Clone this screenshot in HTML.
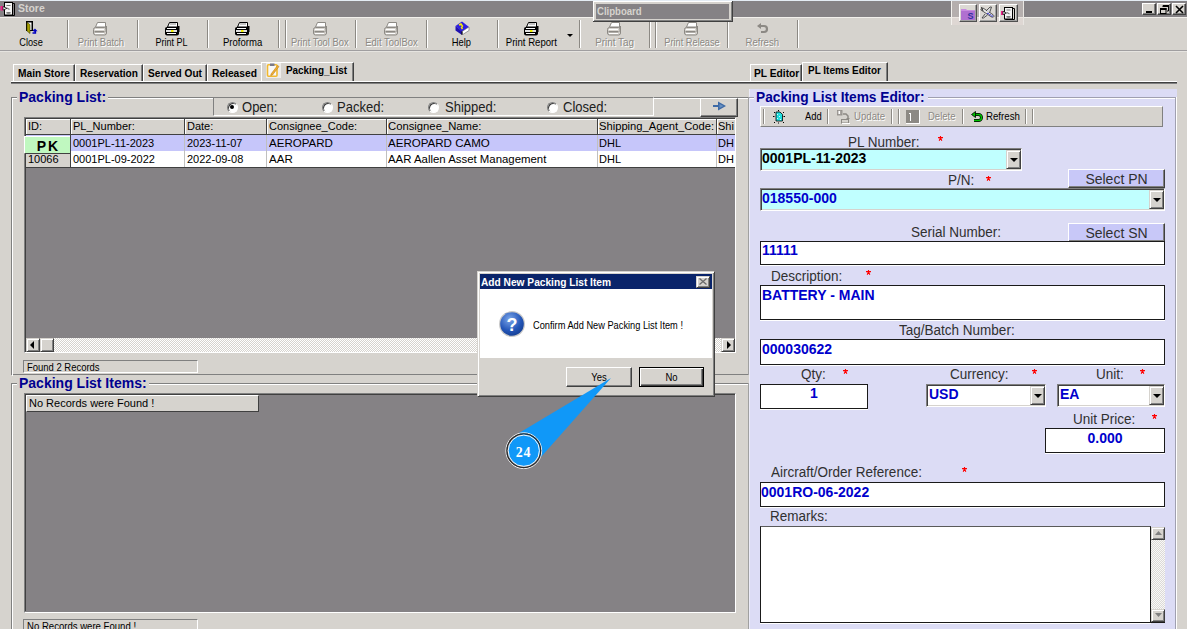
<!DOCTYPE html>
<html><head><meta charset="utf-8">
<style>
*{box-sizing:border-box}
html,body{margin:0;padding:0}
body{width:1187px;height:631px;overflow:hidden;position:relative;background:#d6d3ce;font-family:"Liberation Sans",sans-serif;color:#000}
.a{position:absolute}
.t{position:absolute;white-space:nowrap;line-height:1}
.sep{position:absolute;top:20px;height:28px;width:2px;border-left:1px solid #8c8984;border-right:1px solid #fff}
.tb{position:absolute;top:37px;font-size:11px;line-height:1;white-space:nowrap;text-align:center}
.dis{color:#8c8984;text-shadow:1px 1px 0 #fff}
.tab{position:absolute;top:64px;height:17px;border-top:1px solid #fff;border-left:1px solid #fff;border-right:1px solid #404040;box-shadow:inset -1px 0 0 #808080;font-size:11px;font-weight:bold;line-height:1;white-space:nowrap}
.tt{position:absolute;white-space:nowrap;line-height:1;font-size:11px;font-weight:bold;transform-origin:left}
.etch{position:absolute;border:1px solid #808080;box-shadow:inset 1px 1px 0 #fff,1px 1px 0 #fff}

.rad{position:absolute;width:11px;height:11px;border-radius:50%;background:#fff;border:1px solid;border-color:#808080 #fff #fff #808080;box-shadow:inset 1px 1px 0 #404040}
.rad.sel::after{content:"";position:absolute;left:2.5px;top:2.5px;width:4px;height:4px;border-radius:50%;background:#000}
.rl{font-size:14px;color:#202020;transform:scaleX(0.93);transform-origin:left}
.gl{position:absolute;top:119px;width:1px;height:48px;background:#8c8984}
.gt{position:absolute;white-space:nowrap;line-height:1;font-size:11px;color:#000}
.btn3{position:absolute;background:#d6d3ce;border-top:1px solid #d6d3ce;border-left:1px solid #d6d3ce;border-right:1px solid #404040;border-bottom:1px solid #404040;box-shadow:inset 1px 1px 0 #fff,inset -1px -1px 0 #808080}
.stat{position:absolute;border-top:1px solid #808080;border-left:1px solid #808080;border-right:1px solid #fff;border-bottom:1px solid #fff}

.tt2{position:absolute;white-space:nowrap;line-height:1;font-size:11px;transform-origin:left}
.msep{position:absolute;top:109px;width:2px;height:15px;border-left:1px solid #8c8984;border-right:1px solid #fff}
.lb{position:absolute;white-space:nowrap;line-height:1;font-size:14px;color:#303030;transform:scaleX(0.965);transform-origin:left}
.ast{position:absolute;white-space:nowrap;line-height:1;font-size:12px;color:#f00}
.vt{position:absolute;white-space:nowrap;line-height:1;font-size:14px;font-weight:bold;color:#0000cc}
.cmb{position:absolute;border-top:1px solid #808080;border-left:1px solid #808080;border-right:1px solid #fff;border-bottom:1px solid #fff;box-shadow:inset 1px 1px 0 #404040,inset -1px -1px 0 #d6d3ce}
.ddb{position:absolute;width:15px;background:#d6d3ce;border-top:1px solid #d6d3ce;border-left:1px solid #d6d3ce;border-right:1px solid #404040;border-bottom:1px solid #404040;box-shadow:inset 1px 1px 0 #fff,inset -1px -1px 0 #808080}
.ddb::after{content:"";position:absolute;left:3px;top:7px;border-left:4px solid transparent;border-right:4px solid transparent;border-top:4px solid #000}
.selb{position:absolute;background:#c8c8f8;border-top:1px solid #fff;border-left:1px solid #fff;border-right:1px solid #404040;border-bottom:1px solid #404040;box-shadow:inset -1px -1px 0 #808080}
.box{position:absolute;background:#fff;border:1px solid #1a1a1a;box-shadow:0 1px 0 #fff}

.wc{position:absolute;width:14px;height:12px;background:#d6d3ce;border-top:1px solid #fff;border-left:1px solid #fff;border-right:1px solid #404040;border-bottom:1px solid #404040;box-shadow:inset -1px -1px 0 #808080}
</style></head><body>

<!-- title bar -->
<div class="a" style="left:0;top:0;width:1187px;height:1px;background:#e4ecf4"></div>
<div class="a" style="left:0;top:1px;width:1187px;height:16px;background:#858285"></div>
<div class="a" style="left:0;top:17px;width:1187px;height:1px;background:#f2f0ec"></div>
<div class="t" style="left:18px;top:3px;font-size:11px;font-weight:bold;color:#d6d3ce;transform:scaleX(0.95);transform-origin:left">Store</div>

<!-- toolbar bottom -->
<div class="a" style="left:0;top:50px;width:1187px;height:1px;background:#a09ea0"></div>
<div class="a" style="left:0;top:51px;width:1187px;height:1px;background:#e6e4e0"></div>

<!-- toolbar separators -->
<div class="sep" style="left:67px"></div>
<div class="sep" style="left:137px"></div>
<div class="sep" style="left:207px"></div>
<div class="sep" style="left:278px"></div>
<div class="sep" style="left:285px"></div>
<div class="sep" style="left:355px"></div>
<div class="sep" style="left:426px"></div>
<div class="sep" style="left:497px"></div>
<div class="sep" style="left:579px"></div>
<div class="sep" style="left:649px"></div>
<div class="sep" style="left:655px"></div>
<div class="sep" style="left:727px"></div>
<div class="sep" style="left:797px"></div>

<!-- toolbar labels -->
<div class="tb" style="left:-19.0px;width:100px"><span style="display:inline-block;transform:scaleX(0.836)">Close</span></div>
<div class="tb dis" style="left:51.2px;width:100px"><span style="display:inline-block;transform:scaleX(0.864)">Print Batch</span></div>
<div class="tb" style="left:122.0px;width:100px"><span style="display:inline-block;transform:scaleX(0.818)">Print PL</span></div>
<div class="tb" style="left:192.6px;width:100px"><span style="display:inline-block;transform:scaleX(0.867)">Proforma</span></div>
<div class="tb dis" style="left:270.3px;width:100px"><span style="display:inline-block;transform:scaleX(0.854)">Print Tool Box</span></div>
<div class="tb dis" style="left:341.2px;width:100px"><span style="display:inline-block;transform:scaleX(0.861)">Edit ToolBox</span></div>
<div class="tb" style="left:411.7px;width:100px"><span style="display:inline-block;transform:scaleX(0.850)">Help</span></div>
<div class="tb" style="left:481.7px;width:100px"><span style="display:inline-block;transform:scaleX(0.872)">Print Report</span></div>
<div class="tb dis" style="left:564.3px;width:100px"><span style="display:inline-block;transform:scaleX(0.899)">Print Tag</span></div>
<div class="tb dis" style="left:642.0px;width:100px"><span style="display:inline-block;transform:scaleX(0.839)">Print Release</span></div>
<div class="tb dis" style="left:712.1px;width:100px"><span style="display:inline-block;transform:scaleX(0.873)">Refresh</span></div>
<svg width="0" height="0" style="position:absolute">
 <defs>
  <g id="prn">
   <path d="M4.5 0.5h8v4.5h-10z" fill="#fff" stroke="#000"/>
   <path d="M5 2h6" stroke="#888"/>
   <rect x="0" y="5" width="14" height="8.5" rx="2" fill="#000"/>
   <rect x="2" y="6" width="9" height="1" fill="#fff"/>
   <rect x="1" y="8" width="11" height="2" fill="#e0e0e0"/>
   <rect x="6" y="8" width="2.5" height="2" fill="#f0f000"/>
   <rect x="2" y="11" width="9" height="1" fill="#fff"/>
   <rect x="12" y="4" width="2.5" height="6" fill="#000"/>
  </g>
  <g id="prnd">
   <path d="M4.5 0.5h8v4.5h-10z" fill="#fff" stroke="#8c8984"/>
   <rect x="0.5" y="5.5" width="13" height="7.5" rx="2" fill="#d6d3ce" stroke="#8c8984"/>
   <rect x="2" y="7" width="9" height="1" fill="#fff"/>
   <rect x="1.5" y="9" width="10" height="1.5" fill="#8c8984"/>
   <rect x="2" y="11" width="9" height="1" fill="#fff"/>
   <rect x="12.5" y="4" width="1.5" height="6" fill="#8c8984"/>
  </g>
 </defs>
</svg>
<!-- door -->
<svg class="a" style="left:25px;top:21px" width="13" height="14" viewBox="0 0 13 14"><rect x="1" y="0" width="7" height="10" fill="#000"/><rect x="2.5" y="1.5" width="4" height="7.5" fill="#fff"/><path d="M2 1.5L5 3.5V12.5L2 10z" fill="#a8a000" stroke="#404000" stroke-width="0.6"/><path d="M8 9.5h3l-1.5-1.5M11 9.5l-1.5 1.5M10.5 9.5v2.5H7.5" fill="none" stroke="#0000c0" stroke-width="1.3"/></svg>
<svg class="a" style="left:93px;top:22px" width="15" height="14"><use href="#prnd"/></svg>
<svg class="a" style="left:165px;top:22px" width="15" height="14"><use href="#prn"/></svg>
<svg class="a" style="left:235px;top:22px" width="15" height="14"><use href="#prn"/></svg>
<svg class="a" style="left:313px;top:22px" width="15" height="14"><use href="#prnd"/></svg>
<svg class="a" style="left:384px;top:22px" width="15" height="14"><use href="#prnd"/></svg>
<svg class="a" style="left:524px;top:22px" width="15" height="14"><use href="#prn"/></svg>
<svg class="a" style="left:607px;top:22px" width="15" height="14"><use href="#prnd"/></svg>
<svg class="a" style="left:684px;top:22px" width="15" height="14"><use href="#prnd"/></svg>
<!-- help book -->
<svg class="a" style="left:455px;top:21px" width="15" height="14" viewBox="0 0 15 14"><path d="M0.5 5L7 0.5l7 5.5-7 5z" fill="#3020e0"/><path d="M0.5 5v4.5l6.5 4.5V10.5z" fill="#2010b0"/><path d="M7 10.5v3.5l7-4.5v-3.5z" fill="#fff" stroke="#666" stroke-width="0.6"/><path d="M4 4l2-1 1.5 2-1 1.5 1 1.5" fill="none" stroke="#f8f000" stroke-width="1.4"/><path d="M7 13.5V10.5" stroke="#000"/></svg>
<!-- print report dropdown -->
<svg class="a" style="left:567px;top:34px" width="6" height="4"><path d="M0 0h6L3 3z" fill="#000"/></svg>
<!-- refresh disabled -->
<svg class="a" style="left:756px;top:22px" width="13" height="12" viewBox="0 0 13 12"><path d="M3 4h5a3 3 0 0 1 0 6H5" fill="none" stroke="#8c8984" stroke-width="2.2"/><path d="M1 4l4-3v6z" fill="#8c8984"/></svg>


<!-- tabs left -->
<div class="a" style="left:11px;top:81px;width:1166px;height:1px;background:#fff"></div>
<div class="a" style="left:11px;top:82px;width:1166px;height:1px;background:#404040"></div>
<div class="a" style="left:11px;top:83px;width:1166px;height:1px;background:#808080"></div>
<div class="tab" style="left:13px;width:62px"><span class="tt" style="left:4px;top:3px;transform:scaleX(0.925)">Main Store</span></div>
<div class="tab" style="left:75px;width:68px"><span class="tt" style="left:4px;top:3px;transform:scaleX(0.92)">Reservation</span></div>
<div class="tab" style="left:143px;width:64px"><span class="tt" style="left:4px;top:3px;transform:scaleX(0.92)">Served Out</span></div>
<div class="tab" style="left:207px;width:54px;border-right:0;box-shadow:none"><span class="tt" style="left:4px;top:3px;transform:scaleX(0.93)">Released</span></div>
<div class="tab" style="left:261px;top:62px;height:19px;width:93px"><span class="tt" style="left:24px;top:2px;transform:scaleX(0.9)">Packing_List</span></div>
<svg class="a" style="left:266px;top:63px" width="15" height="15" viewBox="0 0 15 15"><rect x="0" y="0" width="15" height="15" fill="#fff" opacity="0.6"/><rect x="1.5" y="1.8" width="9.5" height="11.5" rx="1" fill="#f8f8f8" stroke="#f0b830" stroke-width="1.6"/><rect x="4" y="0.5" width="4.5" height="2.5" fill="#7a7a8a"/><path d="M5 11l6.5-8.5 1.5 1-6.5 8.5-1.8 0.6z" fill="#f0b030" stroke="#c08020" stroke-width="0.6"/></svg>
<div class="tab" style="left:750px;width:52px"><span class="tt" style="left:3px;top:3px;transform:scaleX(0.93)">PL Editor</span></div>
<div class="tab" style="left:802px;top:62px;height:19px;width:86px"><span class="tt" style="left:5px;top:2px;transform:scaleX(0.905)">PL Items Editor</span></div>


<!-- ===== Packing List group ===== -->
<div class="a" style="left:11px;top:97px;width:738px;height:278px;border:1px solid #808080;border-right:0"></div>
<div class="a" style="left:12px;top:98px;width:737px;height:278px;border:1px solid #fff;border-right:0;border-bottom:0"></div>
<div class="a" style="left:748px;top:97px;width:1px;height:278px;background:#a0a0a0"></div>
<div class="t" style="left:17px;top:89px;padding:0 2px;background:#d6d3ce;font-size:14px;font-weight:bold;color:#000090;height:16px;line-height:16px"><span style="display:inline-block">Packing List:</span></div>

<!-- radio box -->
<div class="a" style="left:213px;top:97px;width:441px;height:19px;border-top:1px solid #808080;border-left:1px solid #808080;border-right:1px solid #fff;border-bottom:1px solid #fff;background:#d6d3ce"></div>
<div class="rad sel" style="left:226.5px;top:101.5px"></div>
<div class="t rl" style="left:242px;top:100px">Open:</div>
<div class="rad" style="left:321.5px;top:101.5px"></div>
<div class="t rl" style="left:337px;top:100px">Packed:</div>
<div class="rad" style="left:428px;top:101.5px"></div>
<div class="t rl" style="left:445px;top:100px">Shipped:</div>
<div class="rad" style="left:547px;top:101.5px"></div>
<div class="t rl" style="left:563px;top:100px">Closed:</div>

<!-- arrow button -->
<div class="a" style="left:700px;top:98px;width:38px;height:19px;background:#d6d3ce;border-top:1px solid #fff;border-left:1px solid #fff;border-right:1px solid #404040;border-bottom:1px solid #404040;box-shadow:inset -1px -1px 0 #808080"></div>
<svg class="a" style="left:711px;top:101px" width="17" height="10" viewBox="0 0 17 10"><path d="M2 4h5V0.5l8 4.5-8 4.5V6H2z" fill="#3d6aa6"/><path d="M8.5 3l4 2-4 2z" fill="#6a90c0"/></svg>

<!-- grid -->
<div class="a" style="left:24px;top:117px;width:712px;height:236px;background:#858285;border-top:1px solid #808080;border-left:1px solid #808080;border-right:1px solid #fff;border-bottom:1px solid #fff"></div>
<div class="a" style="left:25px;top:118px;width:710px;height:1px;background:#404040"></div>
<div class="a" style="left:25px;top:118px;width:1px;height:234px;background:#404040"></div>
<!-- header row -->
<div class="a" style="left:26px;top:119px;width:709px;height:16px;background:#d6d3ce"></div>
<div class="a" style="left:26px;top:119px;width:709px;height:1px;background:#fff"></div>
<div class="a" style="left:26px;top:119px;width:1px;height:15px;background:#fff"></div>
<div class="a" style="left:26px;top:134px;width:709px;height:1px;background:#404040"></div>
<div class="a" style="left:26px;top:135px;width:709px;height:16px;background:#c6c6fa"></div>
<div class="a" style="left:26px;top:151px;width:709px;height:1px;background:#fff"></div>
<div class="a" style="left:26px;top:152px;width:709px;height:15px;background:#fff"></div>
<div class="a" style="left:26px;top:152px;width:45px;height:15px;background:#d6d3ce"></div>
<div class="a" style="left:26px;top:167px;width:709px;height:1px;background:#404040"></div>
<!-- column lines -->
<div class="a" style="left:70px;top:119px;width:1px;height:15px;background:#404040"></div><div class="a" style="left:71px;top:119px;width:1px;height:15px;background:#fff"></div><div class="a" style="left:70px;top:135px;width:1px;height:32px;background:#c0c0c0"></div>
<div class="a" style="left:184px;top:119px;width:1px;height:15px;background:#404040"></div><div class="a" style="left:185px;top:119px;width:1px;height:15px;background:#fff"></div><div class="a" style="left:184px;top:135px;width:1px;height:32px;background:#c0c0c0"></div>
<div class="a" style="left:266px;top:119px;width:1px;height:15px;background:#404040"></div><div class="a" style="left:267px;top:119px;width:1px;height:15px;background:#fff"></div><div class="a" style="left:266px;top:135px;width:1px;height:32px;background:#c0c0c0"></div>
<div class="a" style="left:386px;top:119px;width:1px;height:15px;background:#404040"></div><div class="a" style="left:387px;top:119px;width:1px;height:15px;background:#fff"></div><div class="a" style="left:386px;top:135px;width:1px;height:32px;background:#c0c0c0"></div>
<div class="a" style="left:597px;top:119px;width:1px;height:15px;background:#404040"></div><div class="a" style="left:598px;top:119px;width:1px;height:15px;background:#fff"></div><div class="a" style="left:597px;top:135px;width:1px;height:32px;background:#c0c0c0"></div>
<div class="a" style="left:716px;top:119px;width:1px;height:15px;background:#404040"></div><div class="a" style="left:717px;top:119px;width:1px;height:15px;background:#fff"></div><div class="a" style="left:716px;top:135px;width:1px;height:32px;background:#c0c0c0"></div>

<div class="gt" style="left:28px;top:121px">ID:</div>
<div class="gt" style="left:73px;top:121px">PL_Number:</div>
<div class="gt" style="left:187px;top:121px">Date:</div>
<div class="gt" style="left:269px;top:121px">Consignee_Code:</div>
<div class="gt" style="left:388px;top:121px;transform:scaleX(1.025);transform-origin:left">Consignee_Name:</div>
<div class="gt" style="left:599px;top:121px;transform:scaleX(1.017);transform-origin:left">Shipping_Agent_Code:</div>
<div class="gt" style="left:718px;top:121px">Shi</div>

<div class="gt" style="left:73px;top:138px">0001PL-11-2023</div>
<div class="gt" style="left:187px;top:138px">2023-11-07</div>
<div class="gt" style="left:269px;top:138px;transform:scaleX(1.05);transform-origin:left">AEROPARD</div>
<div class="gt" style="left:388px;top:138px;transform:scaleX(1.05);transform-origin:left">AEROPARD CAMO</div>
<div class="gt" style="left:599px;top:138px">DHL</div>
<div class="gt" style="left:718px;top:138px">DH</div>

<div class="gt" style="left:28px;top:154px">10066</div>
<div class="gt" style="left:73px;top:154px">0001PL-09-2022</div>
<div class="gt" style="left:187px;top:154px">2022-09-08</div>
<div class="gt" style="left:269px;top:154px;transform:scaleX(1.05);transform-origin:left">AAR</div>
<div class="gt" style="left:388px;top:154px;transform:scaleX(1.036);transform-origin:left">AAR Aallen Asset Management</div>
<div class="gt" style="left:599px;top:154px">DHL</div>
<div class="gt" style="left:718px;top:154px">DH</div>
<!-- PK badge -->
<div class="a" style="left:24px;top:136px;width:47px;height:18px;background:#c0f8c0;border-top:1px solid #fff;border-left:1px solid #fff;border-right:1px solid #404040;border-bottom:1px solid #404040"></div>
<div class="t" style="left:25px;top:139px;width:47px;text-align:center;font-size:14px;font-weight:bold;letter-spacing:2px">PK</div>
<div class="a" style="left:70px;top:119px;width:1px;height:48px;background:#404040"></div>

<!-- h scrollbar -->
<div class="a" style="left:26px;top:338px;width:709px;height:14px;background-color:#eceae6;background-image:repeating-conic-gradient(#d6d3ce 0 25%,#fff 0 50%);background-size:2px 2px"></div>
<div class="btn3" style="left:26px;top:338px;width:14px;height:14px"></div>
<svg class="a" style="left:30px;top:341px" width="6" height="8"><path d="M4 0v8L0 4z" fill="#000"/></svg>
<div class="btn3" style="left:40px;top:338px;width:14px;height:14px"></div>
<div class="btn3" style="left:721px;top:338px;width:14px;height:14px"></div>
<svg class="a" style="left:726px;top:341px" width="6" height="8"><path d="M1 0v8L5 4z" fill="#000"/></svg>

<!-- status -->
<div class="stat" style="left:23px;top:360px;width:175px;height:13px"><span class="t" style="left:3px;top:1px;font-size:11px;transform:scaleX(0.86);transform-origin:left">Found 2 Records</span></div>

<!-- ===== Packing List Items group ===== -->
<div class="a" style="left:11px;top:383px;width:738px;height:1px;background:#808080"></div>
<div class="a" style="left:12px;top:384px;width:737px;height:1px;background:#fff"></div>
<div class="a" style="left:11px;top:383px;width:1px;height:248px;background:#808080"></div>
<div class="a" style="left:12px;top:384px;width:1px;height:247px;background:#fff"></div>
<div class="a" style="left:748px;top:383px;width:1px;height:248px;background:#a0a0a0"></div>
<div class="t" style="left:17px;top:375px;padding:0 2px;background:#d6d3ce;font-size:14px;font-weight:bold;color:#000090;height:16px;line-height:16px">Packing List Items:</div>

<div class="a" style="left:24px;top:393px;width:712px;height:220px;background:#858285;border-top:1px solid #808080;border-left:1px solid #808080;border-right:1px solid #fff;border-bottom:1px solid #fff"></div>
<div class="a" style="left:25px;top:394px;width:710px;height:1px;background:#404040"></div>
<div class="a" style="left:25px;top:394px;width:1px;height:217px;background:#404040"></div>
<div class="a" style="left:26px;top:395px;width:233px;height:17px;background:#d6d3ce;border-top:1px solid #fff;border-left:1px solid #fff;border-right:1px solid #404040;border-bottom:1px solid #404040"></div>
<div class="gt" style="left:29px;top:398px">No Records were Found !</div>

<div class="stat" style="left:23px;top:619px;width:175px;height:13px"><span class="t" style="left:3px;top:1px;font-size:11px;transform:scaleX(0.87);transform-origin:left">No Records were Found !</span></div>
<div class="a" style="left:0;top:629px;width:1187px;height:2px;background:#fff"></div>


<!-- ===== Right panel ===== -->
<div class="a" style="left:749px;top:89px;width:428px;height:540px;background:#dcdcf5"></div>
<div class="a" style="left:749px;top:89px;width:1px;height:540px;background:#ececfa"></div>
<div class="a" style="left:749px;top:97px;width:427px;height:1px;background:#a0a0b0"></div>
<div class="a" style="left:750px;top:98px;width:426px;height:1px;background:#fff"></div>
<div class="a" style="left:1175px;top:97px;width:1px;height:532px;background:#a0a0b0"></div>
<div class="a" style="left:1176px;top:97px;width:1px;height:532px;background:#fff"></div>
<div class="a" style="left:754px;top:89px;width:174px;height:16px;background:#dcdcf5"></div><div class="t" style="left:755.5px;top:89px;font-size:14px;font-weight:bold;color:#000090;height:16px;line-height:16px;transform:scaleX(0.98);transform-origin:left">Packing List Items Editor:</div>

<!-- mini toolbar -->
<div class="a" style="left:760px;top:106px;width:403px;height:21px;background:#d6d3ce;border-top:1px solid #fff;border-left:1px solid #fff;border-right:1px solid #808080;border-bottom:1px solid #808080"></div>
<div class="msep" style="left:763px"></div>
<div class="msep" style="left:827px"></div>
<div class="msep" style="left:891px"></div>
<div class="msep" style="left:898px"></div>
<div class="msep" style="left:962px"></div>
<div class="msep" style="left:1025px"></div>
<div class="msep" style="left:1032px"></div>
<div class="tt2" style="left:804.5px;top:111px;transform:scaleX(0.855)">Add</div>
<div class="tt2 dis" style="left:854px;top:111px;transform:scaleX(0.875)">Update</div>
<div class="tt2 dis" style="left:928px;top:111px;transform:scaleX(0.865)">Delete</div>
<div class="tt2" style="left:985.5px;top:111px;transform:scaleX(0.88)">Refresh</div>
<div class="a" style="left:906px;top:110px;width:14px;height:14px;background:#8c8984;border-right:1px solid #fff;border-bottom:1px solid #fff"></div>
<div class="a" style="left:910px;top:113px;width:1px;height:8px;background:#fff"></div>
<div class="a" style="left:909px;top:113px;width:2px;height:1px;background:#fff"></div>
<svg class="a" style="left:772px;top:110px" width="14" height="14" viewBox="0 0 14 14"><path d="M4 2h4l2.5 2.5V11H4z" fill="#20e0e0" stroke="#000" stroke-width="0.8"/><path d="M5 4l1 1M7 6l1 1M5 8l1 1M8 9l1 1" stroke="#fff" stroke-width="0.8"/><g fill="#000"><rect x="1" y="6" width="1.5" height="1"/><rect x="11.5" y="6" width="1.5" height="1"/><rect x="6" y="0" width="1" height="1.2"/><rect x="2" y="2" width="1" height="1"/><rect x="11" y="2" width="1" height="1"/><rect x="2" y="12" width="1" height="1"/><rect x="11" y="12" width="1" height="1"/><rect x="6" y="12.5" width="1" height="1"/></g></svg>
<svg class="a" style="left:837px;top:110px" width="13" height="14" viewBox="0 0 13 14"><rect x="0" y="0" width="5" height="5" fill="#a8a4a0" stroke="#8c8984" stroke-width="0.8"/><rect x="1.5" y="1" width="1.5" height="3" fill="#fff"/><path d="M6 4h3l2 2v2" fill="none" stroke="#8c8984" stroke-width="1.5"/><path d="M9 8l2 2 2-2z" fill="#8c8984"/><rect x="4.5" y="9.5" width="7" height="3.5" fill="none" stroke="#8c8984"/><rect x="5" y="13" width="8" height="1" fill="#fff"/></svg>
<svg class="a" style="left:971px;top:111px" width="12" height="12" viewBox="0 0 12 12"><path d="M3.5 3.5h4a3 3 0 0 1 0 6H3" fill="none" stroke="#000" stroke-width="3"/><path d="M3.5 3.5h4a3 3 0 0 1 0 6H3" fill="none" stroke="#00c000" stroke-width="1.6"/><path d="M0.5 3.5L4.5 0.5v6z" fill="#00c000" stroke="#000" stroke-width="0.8"/></svg>

<!-- PL Number -->
<div class="lb" style="left:848px;top:135px">PL Number:</div>
<svg class="a" style="left:938px;top:136px" width="6" height="6" viewBox="0 0 6 6"><path d="M2.5 0v2.5M0 1.6h5M1.2 4.8L2.2 2.6M3.8 4.8L2.8 2.6" stroke="#f00" stroke-width="1.1"/></svg>
<div class="cmb" style="left:760px;top:148px;width:262px;height:23px;background:#c0ffff"></div>
<div class="ddb" style="left:1006px;top:150px;height:19px"></div>
<div class="vt" style="left:762px;top:151px;color:#000">0001PL-11-2023</div>

<!-- P/N -->
<div class="lb" style="left:948px;top:173px">P/N:</div>
<svg class="a" style="left:986px;top:175.5px" width="6" height="6" viewBox="0 0 6 6"><path d="M2.5 0v2.5M0 1.6h5M1.2 4.8L2.2 2.6M3.8 4.8L2.8 2.6" stroke="#f00" stroke-width="1.1"/></svg>
<div class="selb" style="left:1068px;top:169px;width:97px;height:19px"><span class="t" style="left:0;top:2px;width:95px;text-align:center;font-size:14px;color:#303030">Select PN</span></div>
<div class="cmb" style="left:760px;top:188px;width:405px;height:23px;background:#c0ffff"></div>
<div class="ddb" style="left:1149px;top:190px;height:19px"></div>
<div class="vt" style="left:762px;top:191px">018550-000</div>

<!-- Serial -->
<div class="lb" style="left:911px;top:225px">Serial Number:</div>
<div class="selb" style="left:1068px;top:223px;width:97px;height:19px"><span class="t" style="left:0;top:2px;width:95px;text-align:center;font-size:14px;color:#303030">Select SN</span></div>
<div class="box" style="left:760px;top:241px;width:405px;height:24px"></div>
<div class="vt" style="left:762px;top:243px">11111</div>

<!-- Description -->
<div class="lb" style="left:771px;top:269px">Description:</div>
<svg class="a" style="left:866px;top:270px" width="6" height="6" viewBox="0 0 6 6"><path d="M2.5 0v2.5M0 1.6h5M1.2 4.8L2.2 2.6M3.8 4.8L2.8 2.6" stroke="#f00" stroke-width="1.1"/></svg>
<div class="box" style="left:760px;top:285px;width:405px;height:35px"></div>
<div class="vt" style="left:762px;top:288px">BATTERY - MAIN</div>

<!-- Tag -->
<div class="lb" style="left:899px;top:323px">Tag/Batch Number:</div>
<div class="box" style="left:760px;top:339px;width:405px;height:26px"></div>
<div class="vt" style="left:762px;top:342px">000030622</div>

<!-- Qty / Currency / Unit -->
<div class="lb" style="left:801px;top:367px">Qty:</div>
<svg class="a" style="left:843px;top:368.5px" width="6" height="6" viewBox="0 0 6 6"><path d="M2.5 0v2.5M0 1.6h5M1.2 4.8L2.2 2.6M3.8 4.8L2.8 2.6" stroke="#f00" stroke-width="1.1"/></svg>
<div class="box" style="left:760px;top:384px;width:108px;height:25px"></div>
<div class="vt" style="left:760px;top:386px;width:108px;text-align:center">1</div>

<div class="lb" style="left:950px;top:367px">Currency:</div>
<svg class="a" style="left:1032px;top:368.5px" width="6" height="6" viewBox="0 0 6 6"><path d="M2.5 0v2.5M0 1.6h5M1.2 4.8L2.2 2.6M3.8 4.8L2.8 2.6" stroke="#f00" stroke-width="1.1"/></svg>
<div class="cmb" style="left:926px;top:384px;width:120px;height:23px;background:#fff"></div>
<div class="ddb" style="left:1030px;top:386px;height:19px"></div>
<div class="vt" style="left:929px;top:387px">USD</div>

<div class="lb" style="left:1096px;top:367px">Unit:</div>
<svg class="a" style="left:1140px;top:368.5px" width="6" height="6" viewBox="0 0 6 6"><path d="M2.5 0v2.5M0 1.6h5M1.2 4.8L2.2 2.6M3.8 4.8L2.8 2.6" stroke="#f00" stroke-width="1.1"/></svg>
<div class="cmb" style="left:1057px;top:384px;width:108px;height:23px;background:#fff"></div>
<div class="ddb" style="left:1149px;top:386px;height:19px"></div>
<div class="vt" style="left:1060px;top:387px">EA</div>

<!-- Unit price -->
<div class="lb" style="left:1073px;top:412px">Unit Price:</div>
<svg class="a" style="left:1152px;top:414px" width="6" height="6" viewBox="0 0 6 6"><path d="M2.5 0v2.5M0 1.6h5M1.2 4.8L2.2 2.6M3.8 4.8L2.8 2.6" stroke="#f00" stroke-width="1.1"/></svg>
<div class="box" style="left:1045px;top:428px;width:120px;height:25px"></div>
<div class="vt" style="left:1045px;top:431px;width:120px;text-align:center">0.000</div>

<!-- Aircraft -->
<div class="lb" style="left:771px;top:465px">Aircraft/Order Reference:</div>
<svg class="a" style="left:962px;top:467px" width="6" height="6" viewBox="0 0 6 6"><path d="M2.5 0v2.5M0 1.6h5M1.2 4.8L2.2 2.6M3.8 4.8L2.8 2.6" stroke="#f00" stroke-width="1.1"/></svg>
<div class="box" style="left:760px;top:482px;width:405px;height:25px"></div>
<div class="vt" style="left:761px;top:485px">0001RO-06-2022</div>

<!-- Remarks -->
<div class="lb" style="left:770px;top:509px">Remarks:</div>
<div class="box" style="left:760px;top:526px;width:391px;height:97px;border-top-color:#5a5a5a"></div>
<div class="a" style="left:1151px;top:527px;width:14px;height:96px;background-color:#eceae6;background-image:repeating-conic-gradient(#dcdad6 0 25%,#f8f8f8 0 50%);background-size:2px 2px;border-bottom:1px solid #1a1a1a"></div>
<div class="btn3" style="left:1151px;top:527px;width:14px;height:13px"></div>
<svg class="a" style="left:1155px;top:531px" width="7" height="4"><path d="M3.5 0L7 4H0z" fill="#808080"/></svg>
<div class="btn3" style="left:1151px;top:609px;width:14px;height:13px"></div>
<svg class="a" style="left:1155px;top:613px" width="7" height="4"><path d="M0 0h7L3.5 4z" fill="#808080"/></svg>


<!-- ===== Dialog ===== -->
<div class="a" style="left:477px;top:271px;width:238px;height:126px;background:#d6d3ce;border-top:1px solid #d6d3ce;border-left:1px solid #d6d3ce;border-right:1px solid #404040;border-bottom:1px solid #404040;box-shadow:inset 1px 1px 0 #fff,inset -1px -1px 0 #808080"></div>
<div class="a" style="left:480px;top:274px;width:232px;height:15px;background:#0a246a"></div>
<div class="t" style="left:481px;top:277px;font-size:11px;font-weight:bold;color:#fff;transform:scaleX(0.925);transform-origin:left">Add New Packing List Item</div>
<div class="btn3" style="left:696px;top:276px;width:14px;height:12px"></div>
<svg class="a" style="left:699px;top:278px" width="8" height="7"><path d="M0.5 0.5L7.5 6.5M7.5 0.5L0.5 6.5" stroke="#6a6a6a" stroke-width="1.3"/></svg>
<div class="a" style="left:480px;top:289px;width:232px;height:69px;background:#fff"></div>
<!-- question icon -->
<svg class="a" style="left:498px;top:310px" width="28" height="28" viewBox="0 0 28 28">
 <defs><radialGradient id="qg" cx="0.4" cy="0.3" r="0.8"><stop offset="0" stop-color="#7ba6ea"/><stop offset="0.6" stop-color="#2456b8"/><stop offset="1" stop-color="#123a8a"/></radialGradient></defs>
 <circle cx="14" cy="14" r="13" fill="#c8c8c8"/>
 <circle cx="14" cy="14" r="11.8" fill="url(#qg)"/>
 <text x="14" y="20.5" text-anchor="middle" font-family="Liberation Sans" font-weight="bold" font-size="18" fill="#fff">?</text>
</svg>
<div class="t" style="left:533px;top:320px;font-size:11px;color:#000"><span style="display:inline-block;transform:scaleX(0.84);transform-origin:left">Confirm Add New Packing List Item !</span></div>
<div class="a" style="left:566px;top:367px;width:66px;height:20px;background:#d6d3ce;border-top:1px solid #fff;border-left:1px solid #fff;border-right:1px solid #404040;border-bottom:1px solid #404040;box-shadow:inset -1px -1px 0 #808080"></div>
<div class="t" style="left:566px;top:372px;width:66px;text-align:center;font-size:11px;transform:scaleX(0.86)">Yes</div>
<div class="a" style="left:639px;top:367px;width:65px;height:20px;background:#d6d3ce;border:1px solid #000;box-shadow:inset 1px 1px 0 #fff,inset -1px -1px 0 #404040,inset -2px -2px 0 #808080"></div>
<div class="t" style="left:639px;top:372px;width:65px;text-align:center;font-size:11px;transform:scaleX(0.86)">No</div>

<!-- callout -->
<svg class="a" style="left:495px;top:370px" width="130" height="105" viewBox="495 370 130 105">
 <path d="M519 433 L611 378 L541 457 Z" fill="#1098f8"/>
 <circle cx="523.8" cy="450.7" r="17.9" fill="none" stroke="#f4f4f4" stroke-width="1"/>
 <circle cx="523.8" cy="450.7" r="16.9" fill="none" stroke="#2a2a2a" stroke-width="1.2"/>
 <circle cx="523.8" cy="450.7" r="15.6" fill="#1098f8" stroke="#f8f8f8" stroke-width="1"/>
 <text x="523.4" y="457" text-anchor="middle" font-family="Liberation Serif" font-weight="bold" font-size="14" letter-spacing="0.6" fill="#fff">24</text>
</svg>

<!-- Clipboard floating bar -->
<div class="a" style="left:593px;top:1px;width:140px;height:21px;background:#d6d3ce;border-right:1px solid #404040;border-bottom:1px solid #404040;box-shadow:inset 1px 1px 0 #fff,inset -1px -1px 0 #808080"></div>
<div class="a" style="left:596px;top:4px;width:133px;height:15px;background:#858285"></div>
<div class="t" style="left:597px;top:6px;font-size:11px;font-weight:bold;color:#d6d3ce;transform:scaleX(0.87);transform-origin:left">Clipboard</div>

<!-- title right widgets -->
<div class="a" style="left:951px;top:1px;width:73px;height:24px;background:rgba(230,220,215,0.5);border-left:1px solid #f4f2ee;border-right:1px solid #e8e6e2"></div>
<div class="a" style="left:959px;top:4px;width:18px;height:18px;background:#dcd9d4;border-right:1px solid #505050;border-bottom:1px solid #505050;border-top:1px solid #fff;border-left:1px solid #fff;box-shadow:inset -1px -1px 0 #a0a0a0"></div>
<div class="a" style="left:979px;top:4px;width:18px;height:18px;background:#dcd9d4;border-right:1px solid #505050;border-bottom:1px solid #505050;border-top:1px solid #fff;border-left:1px solid #fff;box-shadow:inset -1px -1px 0 #a0a0a0"></div>
<div class="a" style="left:999px;top:4px;width:19px;height:18px;background:#dcd9d4;border-right:1px solid #505050;border-bottom:1px solid #505050;border-top:1px solid #fff;border-left:1px solid #fff;box-shadow:inset -1px -1px 0 #a0a0a0"></div>
<svg class="a" style="left:961px;top:7px" width="14" height="13" viewBox="0 0 14 13"><path d="M0 2h5l1 1h8v10H0z" fill="#c88be0"/><path d="M0 4h14v9H0z" fill="#b070d0"/><text x="9.5" y="12" text-anchor="middle" font-family="Liberation Sans" font-weight="bold" font-size="9" fill="#3030a0">S</text></svg>
<svg class="a" style="left:980px;top:6px" width="16" height="14" viewBox="0 0 16 14"><path d="M1 3l2-1 9 6c2 1 2.5 2.5 1.5 3s-2 0-3.5-1L1 4z" fill="#e8e8e8" stroke="#333" stroke-width="0.8"/><path d="M6 5l4-4h1.5l-2 6M5 8l-3 4h1.5l4-3" fill="#d8d8d8" stroke="#333" stroke-width="0.8"/><path d="M1.5 1l1.5 4" stroke="#333"/><circle cx="8" cy="7.5" r="0.8" fill="#2020d0"/><circle cx="10" cy="8.8" r="0.8" fill="#2020d0"/><circle cx="12" cy="10" r="0.8" fill="#2020d0"/></svg>
<svg class="a" style="left:1000px;top:5px" width="17" height="16" viewBox="0 0 17 16"><path d="M12.5 3.5h2v11h-9v-1" fill="none" stroke="#000"/><rect x="4.5" y="2.5" width="8" height="11.5" fill="#f4f4f4" stroke="#000"/><path d="M6.5 5h4M7 7.5l2.5 1.5M6.5 11.5c1 1 3 1 4 0" stroke="#777" stroke-width="1.1"/><rect x="1" y="6" width="2" height="4" fill="#f0208a"/><path d="M3 6.3l3.5 1.7-3.5 1.7z" fill="#fff" stroke="#111" stroke-width="0.8"/></svg>

<!-- window controls -->
<div class="wc" style="left:1142px;top:3px"><div class="a" style="left:3px;top:7px;width:6px;height:2px;background:#000"></div></div>
<div class="wc" style="left:1157px;top:3px"><svg class="a" style="left:2px;top:1px" width="9" height="9" viewBox="0 0 9 9"><path d="M3 0.5h5.5v5.5H7M3 0.5V2" fill="none" stroke="#000" stroke-width="1"/><rect x="3" y="0" width="6" height="2" fill="#000"/><rect x="0.5" y="3.5" width="5.5" height="5" fill="none" stroke="#000"/><rect x="0" y="3" width="6.5" height="2" fill="#000"/></svg></div>
<div class="wc" style="left:1172px;top:3px"><svg class="a" style="left:2px;top:1px" width="9" height="9" viewBox="0 0 9 9"><path d="M1 1L8 8M8 1L1 8" stroke="#000" stroke-width="1.6"/></svg></div>

<!-- app icon -->
<svg class="a" style="left:0;top:0" width="17" height="17" viewBox="0 0 17 17"><path d="M12.5 3.5h2v12h-10v-1" fill="none" stroke="#000"/><rect x="4.5" y="2.5" width="8" height="12.5" fill="#f4f4f4" stroke="#000"/><path d="M6.5 5.5h4M7 8l2.5 1.5M6.5 12.5c1 1 3 1 4 0" stroke="#777" stroke-width="1.2"/><rect x="0.5" y="6" width="2.5" height="4.5" fill="#f0208a"/><path d="M3 6.5l4 1.8-4 1.8z" fill="#fff" stroke="#111" stroke-width="0.8"/></svg>

</body></html>
